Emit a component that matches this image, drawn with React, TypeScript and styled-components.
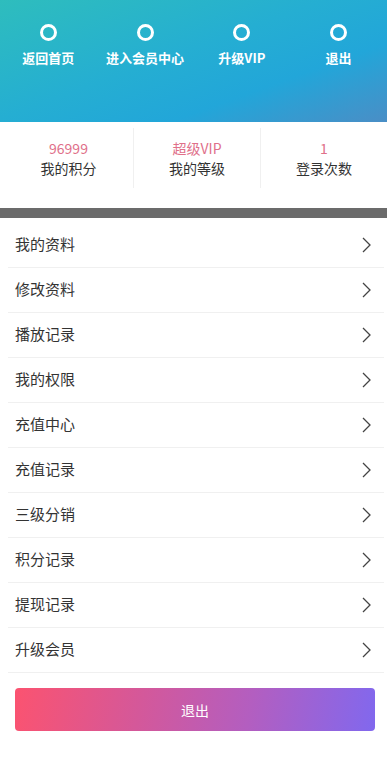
import React from "react"
import styled, { createGlobalStyle } from "styled-components";

type Stat = { value: string, label: string }

const navItems = ["返回首页", "进入会员中心", "升级VIP", "退出"];

const stats: Stat[] = [
    { value: "96999", label: "我的积分" },
    { value: "超级VIP", label: "我的等级" },
    { value: "1", label: "登录次数" },
];

const menuItems = ["我的资料", "修改资料", "播放记录", "我的权限", "充值中心", "充值记录", "三级分销", "积分记录", "提现记录", "升级会员"];

const App: React.FC = () => {
    return (
        <>
            <GlobalStyle />
            <Page>
                <Header>
                    {navItems.map(item => (
                        <NavItem key={item}>
                            <Ring />
                            <NavLabel>{item}</NavLabel>
                        </NavItem>
                    ))}
                </Header>

                <Stats>
                    {stats.map((s, i) => (
                        <StatItem key={s.label} divided={i > 0}>
                            <StatValue>{s.value}</StatValue>
                            <StatLabel>{s.label}</StatLabel>
                        </StatItem>
                    ))}
                </Stats>

                <Separator />

                <Menu>
                    {menuItems.map(item => (
                        <MenuRow key={item}>
                            <MenuText>{item}</MenuText>
                            <Chevron viewBox="0 0 9 16">
                                <path d="M1 1 L8 8 L1 15" fill="none" stroke="#444" strokeWidth="1.3" />
                            </Chevron>
                        </MenuRow>
                    ))}
                </Menu>

                <ButtonWrap>
                    <LogoutButton>退出</LogoutButton>
                </ButtonWrap>
            </Page>
        </>
    )
}

const GlobalStyle = createGlobalStyle`
    * { box-sizing: border-box; }
    body {
        margin: 0;
        background: #fff;
        font-family: "Noto Sans CJK SC", "Noto Sans", sans-serif;
    }
`

const Page = styled.div`
    width: 387px;
    min-height: 762px;
    background: #fff;
`

const Header = styled.div`
    height: 122px;
    display: flex;
    padding-top: 24px;
    background: linear-gradient(160deg, #2ebdbd 0%, #25aed2 45%, #22a6d9 70%, #4a8ec6 100%);
`

const NavItem = styled.div`
    flex: 1;
    display: flex;
    flex-direction: column;
    align-items: center;
`

const Ring = styled.div`
    width: 17px;
    height: 17px;
    border: 3px solid #fff;
    border-radius: 50%;
`

const NavLabel = styled.div`
    margin-top: 8px;
    color: #fff;
    font-size: 13px;
    font-weight: bold;
    line-height: 18px;
`

const Stats = styled.div`
    height: 86px;
    display: flex;
    padding: 6px 0 20px;
`

const StatItem = styled.div<{ divided: boolean }>`
    flex: 1;
    display: flex;
    flex-direction: column;
    align-items: center;
    justify-content: center;
    border-left: ${p => p.divided ? "1px solid #f0f0f0" : "none"};
    &:first-child {
        flex: 0 0 133px;
        padding-left: 4px;
    }
`

const StatValue = styled.div`
    color: #e0708a;
    font-size: 14px;
    line-height: 20px;
`

const StatLabel = styled.div`
    color: #333;
    font-size: 14px;
    line-height: 20px;
`

const Separator = styled.div`
    height: 10px;
    background: #6b6b6b;
`

const Menu = styled.div`
    padding: 5px 3px 0 8px;
`

const MenuRow = styled.div`
    height: 45px;
    display: flex;
    align-items: center;
    justify-content: space-between;
    padding: 0 13px 0 7px;
    border-bottom: 1px solid #f0f0f0;
`

const MenuText = styled.span`
    color: #333;
    font-size: 15px;
    line-height: 20px;
    margin-top: -2px;
`

const Chevron = styled.svg`
    width: 9px;
    height: 16px;
`

const ButtonWrap = styled.div`
    padding: 15px 12px 0 15px;
`

const LogoutButton = styled.button`
    width: 100%;
    height: 43px;
    border: none;
    border-radius: 4px;
    color: #fff;
    font-family: inherit;
    font-size: 14px;
    background: linear-gradient(100deg, #fb5370 0%, #d4589a 35%, #b35ec0 65%, #8168ee 100%);
`

export default App;
